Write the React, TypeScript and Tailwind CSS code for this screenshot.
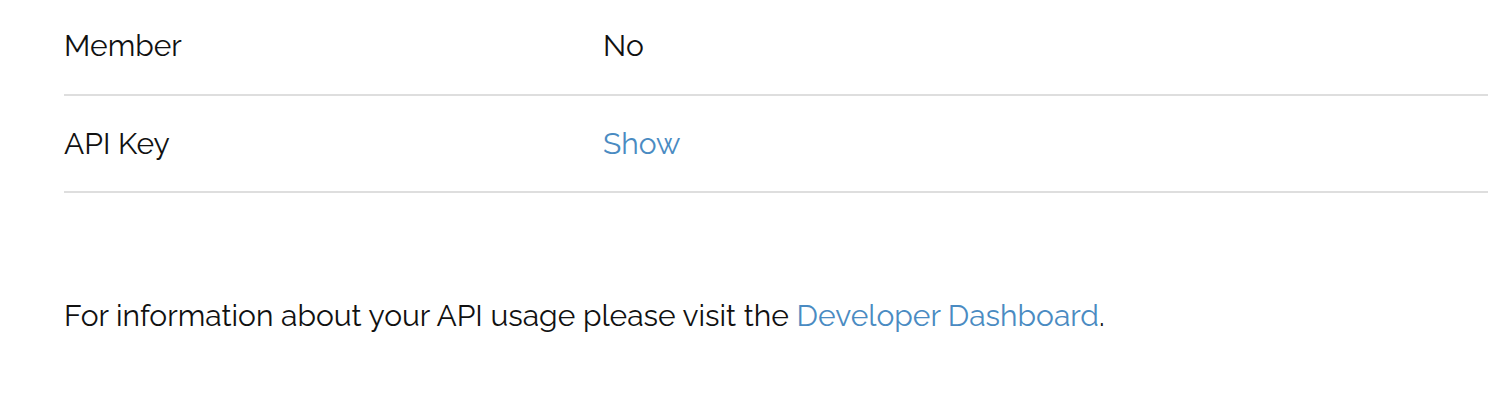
export default function App() {
  const rows = [
    { label: "Member", value: "No", link: false },
    { label: "API Key", value: "Show", link: true },
  ];

  return (
    <div className="min-h-screen bg-white pl-16 text-[30px] leading-[40px] text-[#111] font-['Raleway','Open_Sans','Liberation_Sans',sans-serif]">
      <div className="flex flex-col">
        {rows.map((row, i) => (
          <div
            key={row.label}
            className={`flex items-center border-b-2 border-[#dedede] ${i === 0 ? "h-[96px] pb-[2px]" : "h-[97px]"}`}
          >
            <div className="w-[539px]">{row.label}</div>
            <div>
              {row.link ? (
                <a href="#" className="text-[#4a8bc2]">
                  {row.value}
                </a>
              ) : (
                row.value
              )}
            </div>
          </div>
        ))}
      </div>
      <p className="mt-[103px]">
        For information about your API usage please visit the{" "}
        <a href="#" className="text-[#4a8bc2]">
          Developer Dashboard
        </a>
        .
      </p>
    </div>
  );
}
